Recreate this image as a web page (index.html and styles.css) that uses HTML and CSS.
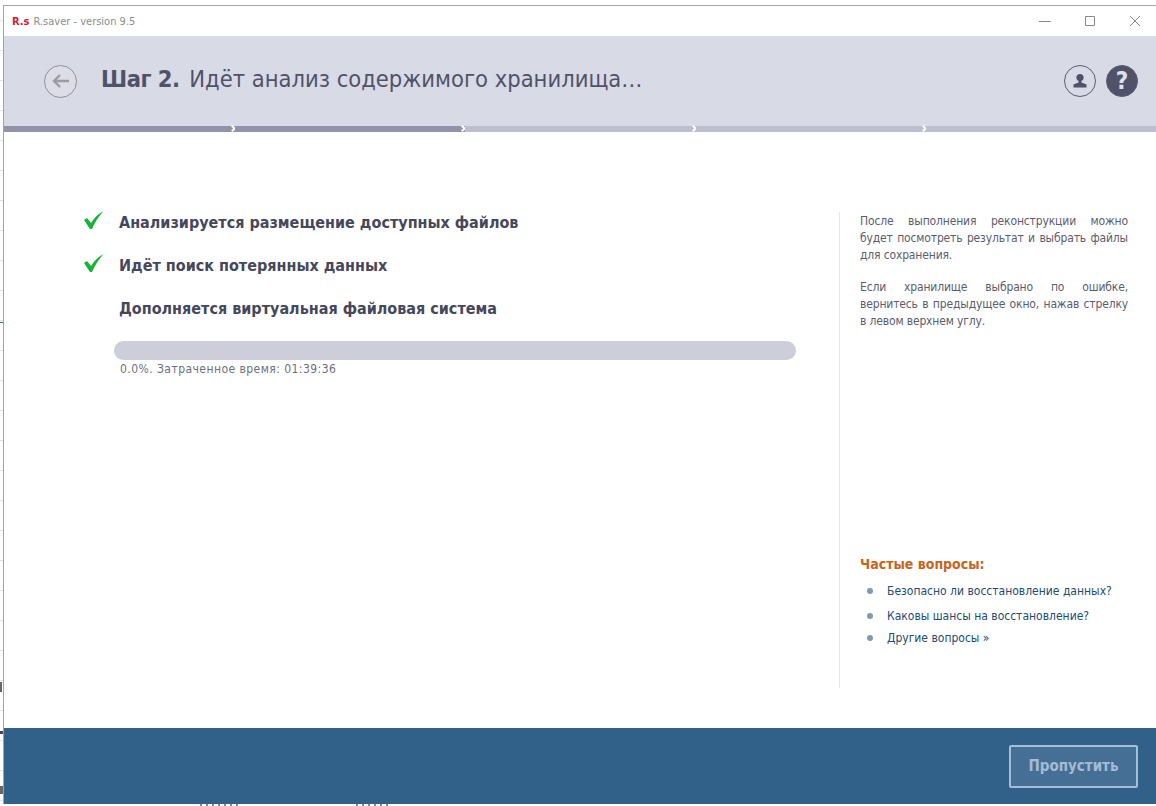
FILE: index.html
```html
<!DOCTYPE html>
<html lang="ru">
<head>
    <meta charset="UTF-8">
    <meta name="viewport" content="width=device-width, initial-scale=1.0">
    <title>R.saver</title>
    <link rel="stylesheet" href="styles.css">
</head>
<body>
    <div class="window">
        <div class="titlebar">
            <div class="app-title">
                <span class="logo">R.s</span>
                <span class="app-name">R.saver - version 9.5</span>
            </div>
            <div class="win-controls">
                <svg width="12" height="12" viewBox="0 0 12 12"><path d="M0 6.5H12" stroke="#8a8a8a" fill="none"/></svg>
                <svg width="12" height="12" viewBox="0 0 12 12"><path d="M1.500 1.500H10.500V10.500H1.500Z" stroke="#8a8a8a" fill="none"/></svg>
                <svg width="12" height="12" viewBox="0 0 12 12"><path d="M1 1L11 11M11 1L1 11" stroke="#8a8a8a" fill="none"/></svg>
            </div>
        </div>

        <div class="header">
            <div class="back-btn">
                <svg width="20" height="16" viewBox="0 0 20 16"><path d="M18 8H3M9 2L3 8L9 14" stroke="#9b9ba6" stroke-width="2.4" fill="none"/></svg>
            </div>
            <h1 class="step-title"><b>Шаг 2.</b> Идёт анализ содержимого хранилища…</h1>
            <div class="header-icons">
                <div class="round-btn">
                    <svg width="18" height="18" viewBox="0 0 18 18"><circle cx="9" cy="5.500" r="3.600" fill="#50526a"/><path d="M7.500 8H10.500V10.500L15.500 12.500V15.500H2.500V12.500L7.500 10.500Z" fill="#50526a"/></svg>
                </div>
                <div class="round-btn help">?</div>
            </div>
        </div>

        <div class="steps-bar">
            <div class="segment done"></div>
            <div class="segment done"></div>
            <div class="segment"></div>
            <div class="segment"></div>
            <div class="segment last"></div>
        </div>

        <div class="content">
            <div class="main-col">
                <div class="task">
                    <svg class="check" width="22" height="20" viewBox="0 0 22 20"><path d="M1 10L4 8L8 13C11 8 15 4 20.500 1C16 6 12 12 9 19H7Z" fill="#14b534"/></svg>
                    <span>Анализируется размещение доступных файлов</span>
                </div>
                <div class="task">
                    <svg class="check" width="22" height="20" viewBox="0 0 22 20"><path d="M1 10L4 8L8 13C11 8 15 4 20.500 1C16 6 12 12 9 19H7Z" fill="#14b534"/></svg>
                    <span>Идёт поиск потерянных данных</span>
                </div>
                <div class="task">
                    <span>Дополняется виртуальная файловая система</span>
                </div>
                <div class="progress"></div>
                <div class="progress-text">0.0%. Затраченное время: 01:39:36</div>
            </div>

            <div class="sidebar">
                <div class="notes">
                    <p>После выполнения реконструкции можно будет посмотреть результат и выбрать файлы для сохранения.</p>
                    <p>Если хранилище выбрано по ошибке, вернитесь в предыдущее окно, нажав стрелку в левом верхнем углу.</p>
                </div>
                <div class="faq">
                    <h3>Частые вопросы:</h3>
                    <ul>
                        <li>Безопасно ли восстановление данных?</li>
                        <li>Каковы шансы на восстановление?</li>
                        <li>Другие вопросы »</li>
                    </ul>
                </div>
            </div>
        </div>

        <div class="footer">
            <button class="skip-btn">Пропустить</button>
        </div>
    </div>
</body>
</html>
```

FILE: styles.css
```css
html, body {
    height: 100%;
}
body {
    margin: 0;
    font-family: "DejaVu Sans Condensed", "DejaVu Sans", sans-serif;
    overflow: hidden;
    color: #45485a;
    /* bits of the other window showing behind this one */
    background-color: #fff;
    background-repeat: no-repeat, no-repeat, no-repeat, no-repeat, no-repeat, no-repeat, repeat-y;
    background-image:
        linear-gradient(#2f6f80, #2f6f80),
        linear-gradient(#666, #666),
        linear-gradient(#444, #444),
        linear-gradient(#666, #666),
        repeating-linear-gradient(90deg, #888 0 2px, transparent 2px 6px),
        repeating-linear-gradient(90deg, #888 0 2px, transparent 2px 6px),
        linear-gradient(#e2e2e2 1px, transparent 1px);
    background-size: 3px 1px, 2px 10px, 3px 3px, 3px 8px, 34px 2px, 38px 2px, 3px 30px;
    background-position: 0 322px, 0 682px, 0 731px, 0 786px, 356px 804px, 200px 804px, 0 20px;
}
.window {
    box-sizing: border-box;
    height: 799px;
    margin: 5px 0 0 3px;
    background: #fff;
    border-top: 1px solid #a3a3a3;
    border-left: 1px solid #a3a3a3;
    display: flex;
    flex-direction: column;
}
.titlebar {
    height: 30px;
    background: #fff;
    display: flex;
    align-items: center;
    justify-content: space-between;
    padding: 0 15px 0 8px;
}
.app-title {
    display: flex;
    align-items: center;
    gap: 4px;
}
.logo {
    color: #d0202e;
    font-size: 11px;
    font-weight: bold;
}
.app-name {
    font-size: 11px;
    color: #8b8b8b;
}
.win-controls {
    display: flex;
    gap: 33px;
}
.header {
    height: 90px;
    background: #d8dae6;
    display: flex;
    align-items: center;
    padding: 0 18px 0 40px;
}
.back-btn {
    box-sizing: border-box;
    width: 33px;
    height: 33px;
    border: 1px solid #8f909e;
    border-radius: 50%;
    background: #dcdde6;
    display: flex;
    align-items: center;
    justify-content: center;
}
.step-title {
    margin: 0 0 4px 24px;
    font-size: 23.500px;
    font-weight: normal;
    color: #50526a;
    flex: 1;
}
.step-title b {
    margin-right: 3px;
    letter-spacing: -.5px;
}
.header-icons {
    display: flex;
    gap: 10px;
}
.round-btn {
    box-sizing: border-box;
    width: 32px;
    height: 32px;
    border: 1px solid #5c5e72;
    border-radius: 50%;
    display: flex;
    align-items: center;
    justify-content: center;
}
.help {
    background: #50526a;
    color: #dfe0ea;
    font-size: 24px;
    font-weight: bold;
}
.steps-bar {
    height: 6px;
    display: flex;
}
.segment {
    flex: 0 0 230.500px;
    background: #bcbfcf;
    position: relative;
}
.segment.done {
    background: #9193ab;
}
.segment.last {
    flex: 1;
}
.segment:not(.last)::after {
    content: "";
    position: absolute;
    right: 0;
    top: 0;
    width: 3px;
    height: 3px;
    border-top: 2px solid #fff;
    border-right: 2px solid #fff;
    transform: rotate(45deg);
}
.content {
    flex: 1;
    display: flex;
    background: #fff;
    padding: 69px 0 40px 0;
}
.main-col {
    width: 755px;
    padding-left: 80px;
}
.task {
    height: 43px;
    padding-left: 35px;
    display: flex;
    align-items: center;
    position: relative;
    font-size: 16px;
    font-weight: bold;
    color: #45485a;
}
.check {
    position: absolute;
    left: -1px;
    top: 9px;
}
.progress {
    width: 682px;
    height: 19px;
    margin: 11px 0 0 30px;
    background: #cdced9;
    border-radius: 10px;
}
.progress-text {
    margin: 2px 0 0 36px;
    font-size: 12px;
    letter-spacing: .45px;
    color: #6c6f80;
}
.sidebar {
    flex: 1;
    margin-top: 11px;
    border-left: 1px solid #e6e6ea;
    padding: 0 28px 0 20px;
    display: flex;
    flex-direction: column;
    justify-content: space-between;
    font-size: 12px;
}
.notes {
    padding-top: 1px;
    letter-spacing: -.15px;
}
.notes p {
    margin: 0 0 15px;
    line-height: 17px;
    text-align: justify;
    color: #5a5d6e;
}
.faq {
    padding-bottom: 43px;
}
.faq h3 {
    margin: 0 0 12px;
    font-size: 14px;
    color: #c8651b;
}
.faq ul {
    margin: 0;
    padding: 0;
    list-style: none;
}
.faq li {
    position: relative;
    padding-left: 27px;
    margin-bottom: 8px;
    color: #234b70;
}
.faq li:first-child {
    margin-bottom: 11px;
}
.faq li:last-child {
    margin-bottom: 0;
}
.faq li::before {
    content: "";
    position: absolute;
    left: 7px;
    top: 4px;
    width: 6px;
    height: 6px;
    border-radius: 50%;
    background: #7f9ab4;
}
.footer {
    height: 76px;
    background: #316089;
    display: flex;
    align-items: center;
    justify-content: flex-end;
    padding-right: 18px;
}
.skip-btn {
    width: 129px;
    height: 43px;
    background: #466f96;
    border: 2px solid #a5bdd6;
    border-radius: 2px;
    color: #a3bcd4;
    font-family: "DejaVu Sans Condensed", "DejaVu Sans", sans-serif;
    font-size: 15px;
    font-weight: bold;
}
```
